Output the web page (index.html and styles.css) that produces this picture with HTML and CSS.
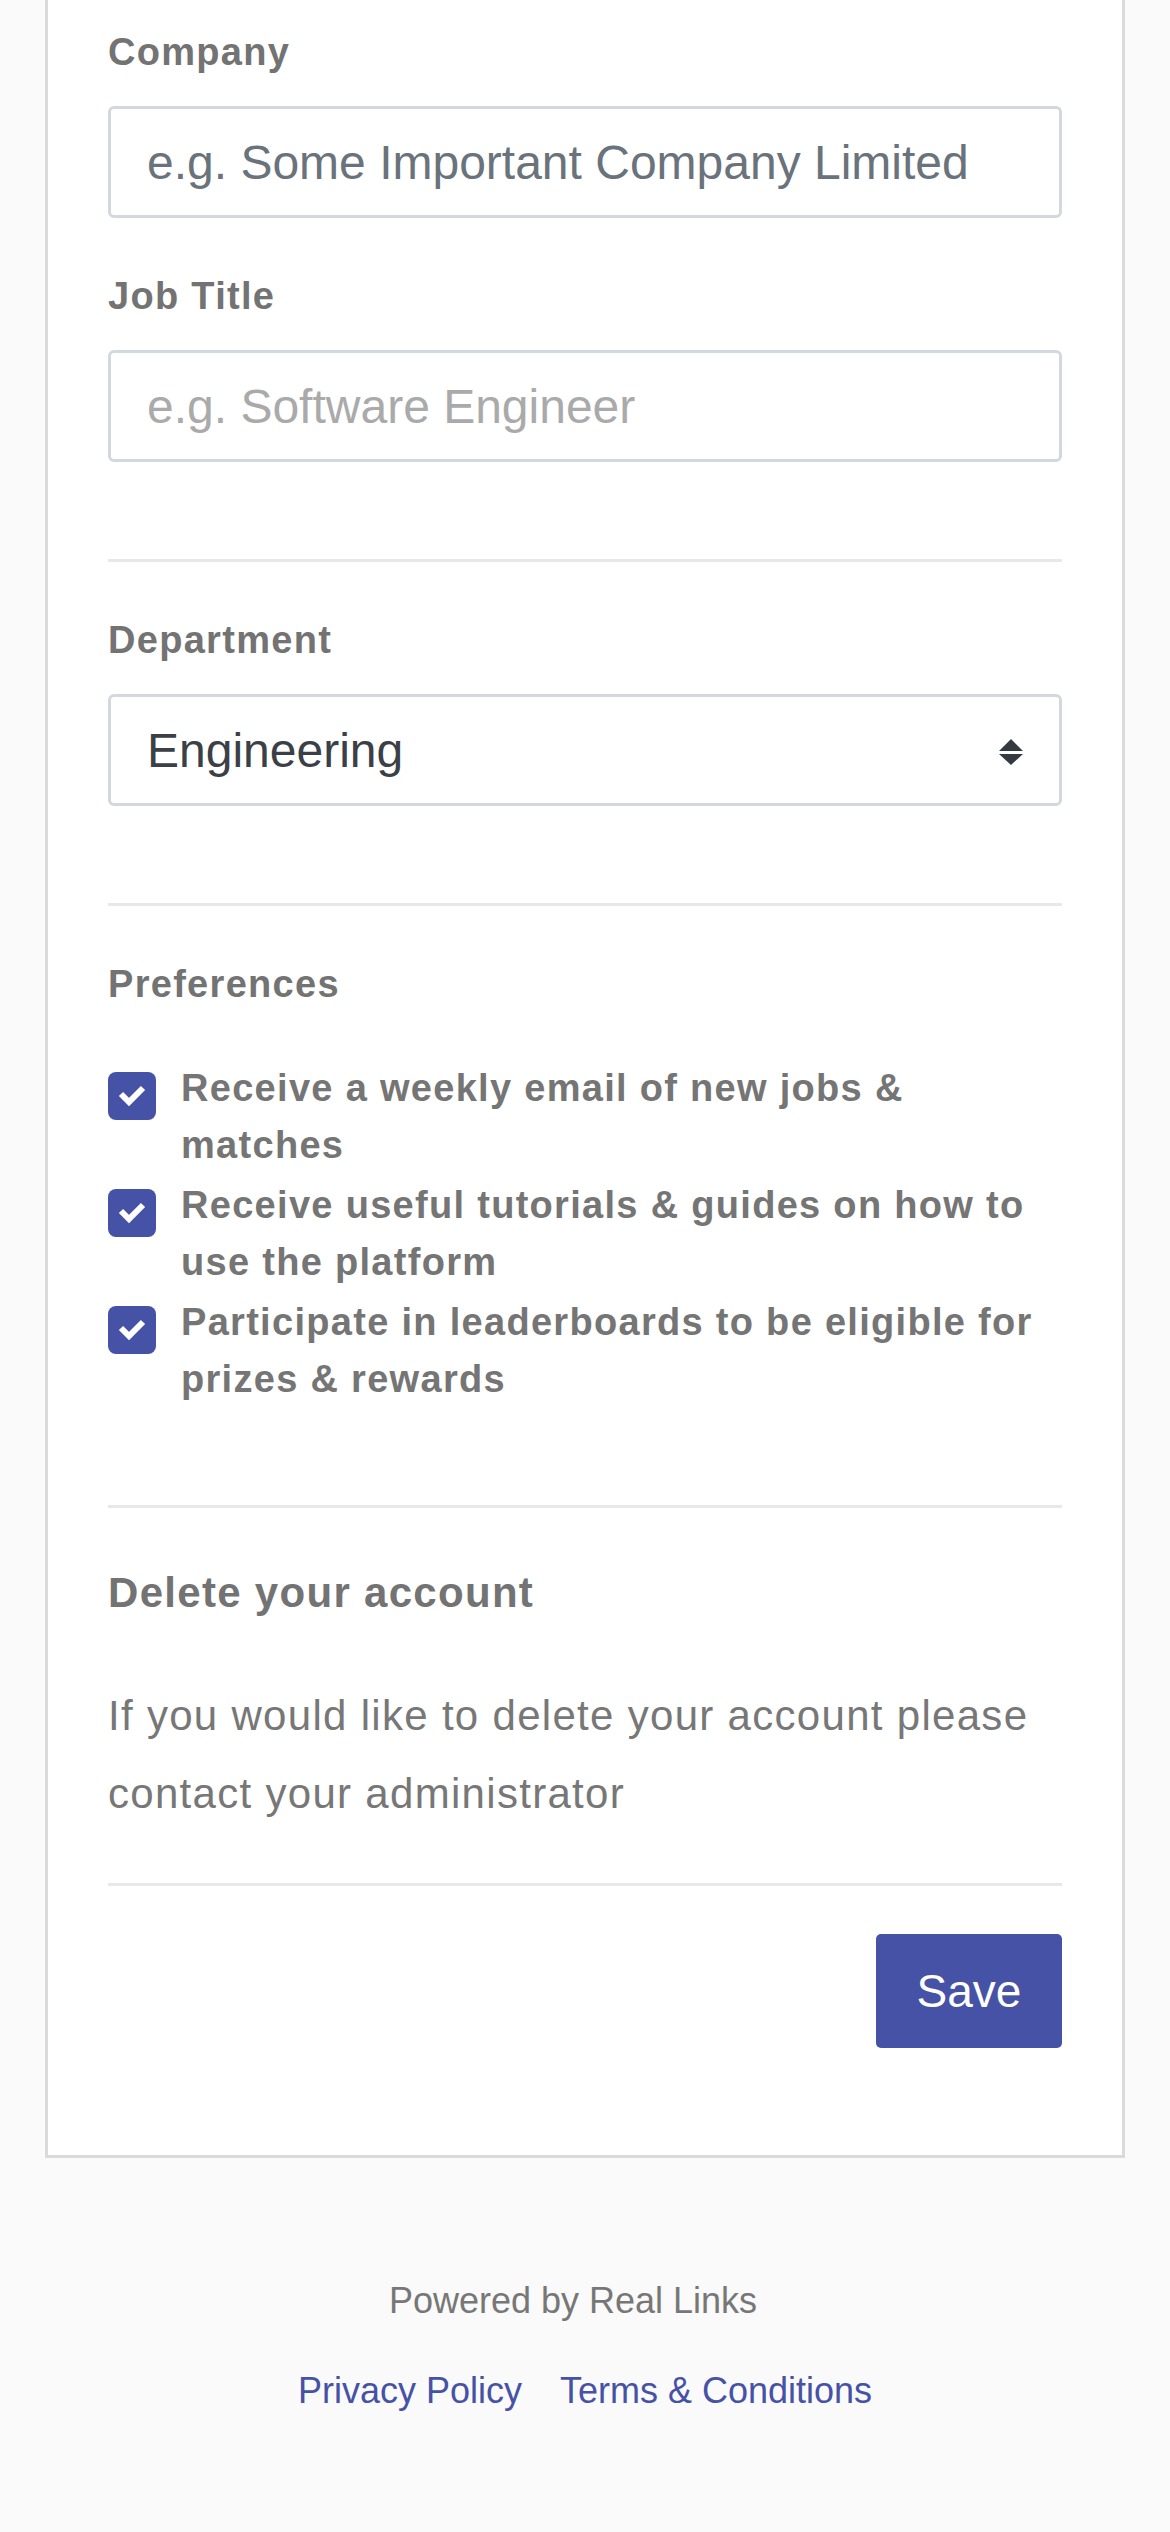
FILE: index.html
```html
<!DOCTYPE html>
<html lang="en">
<head>
    <meta charset="UTF-8">
    <meta name="viewport" content="width=device-width, initial-scale=1.0">
    <title>Account settings</title>
    <link rel="stylesheet" href="styles.css">
</head>
<body>
<div class="page">
    <form class="card">
        <!-- 基本信息 -->
        <div class="field">
            <label class="label" for="company">Company</label>
            <input class="input input-dark" id="company" type="text" placeholder="e.g. Some Important Company Limited">
        </div>
        <div class="field">
            <label class="label" for="job">Job Title</label>
            <input class="input" id="job" type="text" placeholder="e.g. Software Engineer">
        </div>

        <hr class="line">

        <div class="field">
            <label class="label" for="dept">Department</label>
            <div class="select-wrap">
                <select class="input select" id="dept">
                    <option>Engineering</option>
                    <option>Design</option>
                    <option>Marketing</option>
                </select>
                <svg class="select-arrow" width="24" height="26" viewBox="0 0 24 26">
                    <path d="M12 0 L24 12 L0 12 Z M0 15 L24 15 L12 26 Z" fill="#343a40"/>
                </svg>
            </div>
        </div>

        <hr class="line">

        <div class="field">
            <span class="label">Preferences</span>
            <ul class="checks">
                <li>
                    <span class="box">
                        <svg width="48" height="48" viewBox="0 0 48 48"><path d="M13 22 L21 30 L35 16" fill="none" stroke="#fff" stroke-width="6"/></svg>
                    </span>
                    <span class="check-text">Receive a weekly email of new jobs &amp; matches</span>
                </li>
                <li>
                    <span class="box">
                        <svg width="48" height="48" viewBox="0 0 48 48"><path d="M13 22 L21 30 L35 16" fill="none" stroke="#fff" stroke-width="6"/></svg>
                    </span>
                    <span class="check-text">Receive useful tutorials &amp; guides on how to use the platform</span>
                </li>
                <li>
                    <span class="box">
                        <svg width="48" height="48" viewBox="0 0 48 48"><path d="M13 22 L21 30 L35 16" fill="none" stroke="#fff" stroke-width="6"/></svg>
                    </span>
                    <span class="check-text">Participate in leaderboards to be eligible for prizes &amp; rewards</span>
                </li>
            </ul>
        </div>

        <hr class="line">

        <!-- 删除账号 -->
        <h3 class="title">Delete your account</h3>
        <p class="text">If you would like to delete your account please contact your administrator</p>

        <hr class="line line-last">

        <div class="actions">
            <button class="btn" type="button">Save</button>
        </div>
    </form>

    <div class="footer">
        <p class="powered">Powered by Real Links</p>
        <p class="links">
            <a href="#">Privacy Policy</a>
            <a href="#">Terms &amp; Conditions</a>
        </p>
    </div>
</div>
</body>
</html>
```

FILE: styles.css
```css
*{
    padding: 0;
    margin: 0;
    box-sizing: border-box;
}
body{
    font-family: "Liberation Sans", Arial, sans-serif;
    background: #fafafa;
    color: #757575;
}
ul{
    list-style: none;
}

.page{
    padding: 0 45px;
}
.card{
    background: #fff;
    border: 3px solid #dadada;
    border-top: 0;
    padding: 29px 60px 107px;
}

/*表单项*/
.field{
    margin-bottom: 55px;
}
.field:last-of-type{
    margin-bottom: 0;
}
.label{
    display: block;
    font-size: 38px;
    line-height: 46px;
    font-weight: bold;
    letter-spacing: 1.3px;
    color: #737373;
    margin-bottom: 31px;
}
.input{
    display: block;
    width: 100%;
    height: 112px;
    border: 3px solid #d3d8de;
    border-radius: 6px;
    padding: 0 36px;
    font-family: inherit;
    font-size: 48px;
    color: #3b4047;
    background: #fff;
    outline: none;
}
.input::placeholder{
    color: #aaaaaa;
}
.input-dark::placeholder{
    color: #6a727c;
}

.select-wrap{
    position: relative;
}
.select{
    -webkit-appearance: none;
    appearance: none;
}
.select-arrow{
    position: absolute;
    right: 39px;
    top: 45px;
    pointer-events: none;
}

.line{
    border: 0;
    height: 3px;
    background: #e8e8e8;
    margin: 98px 0 55px;
}
.field + .line{
    margin-top: 97px;
}

/*偏好设置*/
.checks{
    margin-top: 53px;
}
.checks li{
    display: flex;
    gap: 25px;
    margin-bottom: 3px;
}
.box{
    flex: none;
    width: 48px;
    height: 48px;
    margin-top: 12px;
    border-radius: 8px;
    background: #4652a5;
}
.box svg{
    display: block;
}
.check-text{
    font-size: 38px;
    line-height: 57px;
    font-weight: bold;
    letter-spacing: 1.3px;
    color: #757575;
}

.title{
    font-size: 42px;
    line-height: 50px;
    font-weight: bold;
    letter-spacing: 1.3px;
    color: #737373;
    margin-top: 60px;
}
.text{
    font-size: 42px;
    line-height: 78px;
    letter-spacing: 1.3px;
    color: #777;
    margin-top: 59px;
}
.line-last{
    margin: 50px 0 48px;
}

.actions{
    display: flex;
    justify-content: flex-end;
}
.btn{
    width: 186px;
    height: 114px;
    border: 0;
    border-radius: 5px;
    background: #4652a5;
    color: #fff;
    font-family: inherit;
    font-size: 46px;
}

/*底部*/
.footer{
    text-align: center;
    padding: 121px 0 120px;
    font-size: 36px;
    line-height: 43px;
}
.powered{
    color: #777;
    padding-right: 24px;
}
.links{
    margin-top: 47px;
}
.links a{
    color: #4652a5;
    text-decoration: none;
    margin: 0 14px;
}
```
